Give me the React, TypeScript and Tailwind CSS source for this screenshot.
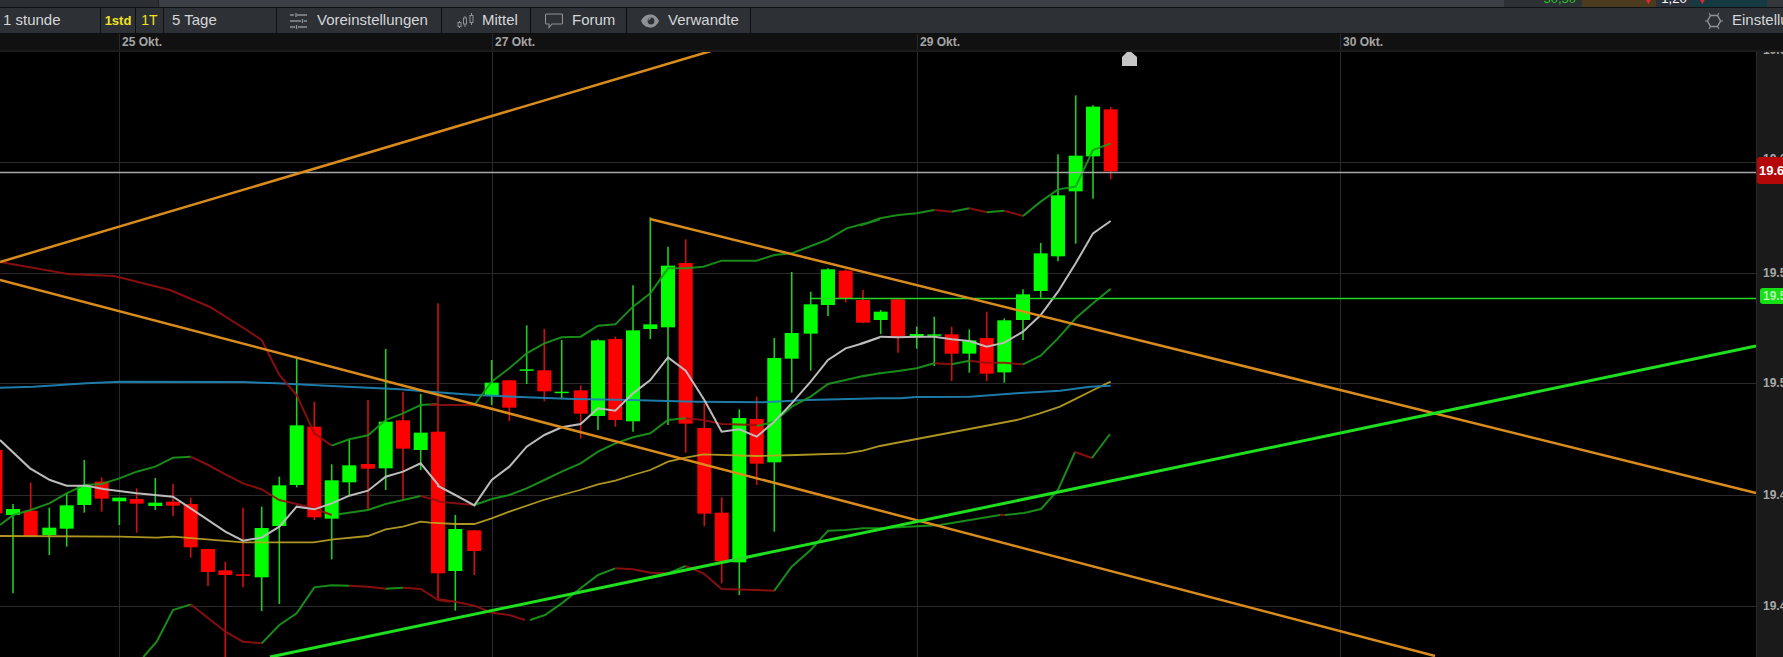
type Pt = [number, number];

// Each list was read from one part of the chart, so each has its own offset
const a = (l: number[]): Pt[] => pairs(l).map(([x, y]) => [x / 3, 330 + y / 3]);
const b = (l: number[]): Pt[] => pairs(l).map(([x, y]) => [430 + x / 3, 200 + y / 3]);
const c = (l: number[]): Pt[] => pairs(l).map(([x, y]) => [860 + x / 3, 60 + y / 3]);

function pairs(l: number[]): Pt[] {
  const out: Pt[] = [];
  for (let i = 0; i < l.length; i += 2) out.push([l[i], l[i + 1]]);
  return out;
}

const toPath = (p: Pt[]) => p.map(([x, y]) => `${x},${y}`).join(' ');

const G = '#00ff00';
const R = '#ff0000';

// x, wick top, body top, body bottom, wick bottom, colour
type Candle = [number, number, number, number, number, string];

const candles: Candle[] = [
  ...([
    [-4.5, 330, 360, 550, 560, R],
    [13, 522, 537, 555, 790, G],
    [30.7, 458, 542, 618, 620, R],
    [49.3, 533, 593, 615, 675, G],
    [66.7, 490, 526, 596, 650, G],
    [84.3, 390, 467, 525, 548, G],
    [101.7, 442, 455, 506, 545, R],
    [119.3, 503, 503, 514, 585, G],
    [136.7, 475, 507, 521, 608, R],
    [155.3, 444, 518, 528, 540, G],
    [173, 462, 515, 527, 558, R],
    [190.7, 503, 522, 652, 683, R],
    [208, 657, 657, 726, 768, R],
    [225.3, 695, 721, 735, 981, R],
    [243, 533, 733, 735, 772, R],
    [261.7, 530, 594, 742, 843, G],
    [279.3, 440, 466, 588, 822, G],
    [296.7, 80, 286, 465, 472, G],
    [314.3, 215, 290, 562, 570, R],
    [331.7, 403, 451, 566, 688, G],
    [349.3, 330, 406, 457, 495, G],
    [368, 210, 402, 416, 540, R],
    [385.7, 57, 275, 415, 480, G],
    [403, 185, 271, 356, 507, R],
    [420.7, 192, 308, 360, 420, G],
  ] as Candle[]).map(([x, h, t, u, l, col]): Candle => [x, 330 + h / 3, 330 + t / 3, 330 + u / 3, 330 + l / 3, col]),
  ...([
    [438, 310, 695, 1120, 1195, R],
    [455.3, 945, 987, 1113, 1232, G],
    [474.3, 990, 991, 1053, 1125, R],
    [491.7, 480, 548, 586, 615, G],
    [509.3, 540, 541, 623, 663, R],
    [526.7, 376, 508, 510, 552, G],
    [544.3, 387, 511, 574, 604, R],
    [561.7, 420, 575, 577, 595, G],
    [580.7, 556, 571, 641, 716, R],
    [598, 418, 421, 648, 690, G],
    [615.3, 410, 417, 660, 680, R],
    [633, 256, 391, 664, 695, G],
    [650.3, 52, 373, 387, 417, G],
    [668, 140, 197, 382, 675, G],
    [685.7, 118, 189, 671, 758, R],
    [704.3, 610, 684, 941, 978, R],
    [721.7, 892, 938, 1084, 1150, R],
    [739.3, 628, 654, 1087, 1185, G],
    [756.7, 590, 657, 791, 855, R],
    [774.3, 414, 474, 787, 995, G],
    [791.7, 216, 399, 476, 578, G],
    [810.7, 275, 313, 401, 512, G],
    [828, 205, 208, 315, 348, G],
    [845.7, 208, 212, 296, 307, R],
    [863, 270, 300, 368, 370, R],
  ] as Candle[]).map(([x, h, t, u, l, col]): Candle => [x, 200 + h / 3, 200 + t / 3, 200 + u / 3, 200 + l / 3, col]),
  ...([
    [880.7, 750, 755, 780, 822, G],
    [898, 718, 718, 830, 878, R],
    [916.7, 800, 822, 832, 866, G],
    [934.3, 770, 823, 826, 918, G],
    [951.7, 800, 823, 881, 963, R],
    [969.3, 808, 841, 881, 938, G],
    [986.7, 755, 834, 941, 963, R],
    [1004.3, 775, 781, 937, 968, G],
    [1023, 688, 703, 780, 840, G],
    [1040.7, 549, 580, 693, 713, G],
    [1058, 283, 406, 589, 604, G],
    [1075.7, 106, 287, 394, 551, G],
    [1093, 136, 140, 289, 416, G],
    [1110.7, 141, 148, 334, 358, R],
  ] as Candle[]).map(([x, h, t, u, l, col]): Candle => [x, 60 + h / 3, 60 + t / 3, 60 + u / 3, 60 + l / 3, col]),
];

const BG = '#1c9a1c';
const BR = '#960f0f';

// Bollinger bands change colour by direction
const bands: { color: string; pts: Pt[] }[] = [
  // upper
  { color: BR, pts: [[0, 262], [68, 274], [114, 276], [170, 290], [210, 307], ...a([740, 0, 785, 30, 838, 135, 890, 195, 943, 310, 995, 347])] },
  { color: BG, pts: a([995, 347, 1048, 328, 1104, 316, 1157, 270, 1209, 250, 1262, 225, 1315, 222]) },
  { color: BR, pts: [...a([1315, 222]), ...b([0, 615, 133, 615])] },
  { color: BG, pts: [...b([133, 615, 185, 545, 238, 505, 290, 460, 343, 430, 395, 412, 452, 410, 504, 377, 556, 373, 609, 320, 661, 280, 714, 205, 767, 205, 820, 200, 875, 182, 980, 182, 1033, 165, 1085, 160, 1190, 120, 1250, 85, 1350, 58]), ...c([0, 497, 60, 475, 115, 465, 170, 460, 223, 450])] },
  { color: BR, pts: c([223, 450, 275, 455]) },
  { color: BG, pts: c([275, 455, 328, 445]) },
  { color: BR, pts: c([328, 445, 380, 457]) },
  { color: BG, pts: c([380, 457, 433, 452]) },
  { color: BR, pts: c([433, 452, 489, 468]) },
  { color: BG, pts: c([489, 468, 542, 425, 594, 388, 647, 380, 699, 270, 752, 250]) },
  // middle
  { color: BG, pts: a([0, 585, 40, 555, 92, 540, 148, 520, 200, 490, 253, 465, 305, 462, 358, 445, 410, 425, 466, 410, 519, 383, 572, 380]) },
  { color: BR, pts: a([572, 380, 625, 405, 676, 433, 729, 460, 785, 478, 838, 510, 890, 522, 943, 535, 995, 555]) },
  { color: BG, pts: a([1015, 553, 1104, 540, 1157, 522, 1262, 498]) },
  { color: BR, pts: [...a([1262, 498, 1315, 512]), ...b([24, 905, 133, 915])] },
  { color: BG, pts: b([133, 915, 185, 897, 238, 885, 290, 865, 343, 840, 395, 815, 452, 790, 504, 755, 556, 730, 609, 712, 661, 700, 714, 660, 767, 655]) },
  { color: BR, pts: b([767, 655, 820, 660, 875, 672, 980, 675]) },
  { color: BG, pts: [...b([980, 678, 1033, 665, 1085, 620, 1142, 590, 1194, 552, 1247, 540, 1299, 528, 1350, 520]), ...c([0, 950, 60, 940, 115, 933, 170, 925, 223, 910])] },
  { color: BR, pts: c([223, 910, 275, 913]) },
  { color: BG, pts: c([275, 913, 328, 902]) },
  { color: BR, pts: c([328, 902, 380, 908, 433, 908, 489, 913]) },
  { color: BG, pts: c([489, 913, 542, 887, 594, 835, 647, 775, 699, 730, 752, 686]) },
  // lower
  { color: BG, pts: a([430, 981, 470, 935, 519, 840, 572, 823]) },
  { color: BR, pts: a([572, 823, 625, 865, 676, 905, 729, 935, 785, 940]) },
  { color: BG, pts: a([785, 940, 838, 885, 890, 850, 943, 772, 995, 766, 1048, 767]) },
  { color: BR, pts: a([1048, 767, 1104, 770, 1157, 776]) },
  { color: BG, pts: a([1157, 776, 1209, 773]) },
  { color: BR, pts: [...a([1209, 773, 1262, 777, 1315, 810, 1350, 815]), ...b([24, 1197, 76, 1205, 133, 1217, 185, 1238, 238, 1245, 285, 1260])] },
  { color: BG, pts: b([300, 1260, 345, 1245, 395, 1210, 452, 1165, 504, 1125, 556, 1105]) },
  { color: BR, pts: b([556, 1105, 609, 1108, 661, 1118, 714, 1120]) },
  { color: BG, pts: b([714, 1120, 767, 1098]) },
  { color: BR, pts: b([767, 1098, 820, 1120, 875, 1167, 1033, 1172]) },
  { color: BG, pts: [...b([1033, 1172, 1085, 1100, 1142, 1050, 1194, 992, 1247, 990, 1299, 985, 1350, 985]), [940, 525], [1000, 515]] },
  { color: BR, pts: [[1000, 515], [1005, 515]] },
  { color: BG, pts: [[1005, 515], [1024, 513], [1041, 509], [1058, 490], [1075, 452]] },
  { color: BR, pts: [[1075, 452], [1092, 458]] },
  { color: BG, pts: [[1092, 458], [1110, 434]] },
];

const white = [
  ...a([0, 330, 90, 415, 150, 450, 200, 467, 260, 467, 310, 477, 410, 490, 519, 500, 572, 535, 676, 605, 729, 632, 785, 623, 838, 590, 890, 530, 943, 538, 995, 520, 1048, 497, 1104, 482, 1157, 440, 1209, 425, 1262, 400, 1315, 465]),
  ...b([24, 858, 76, 885, 133, 916, 185, 840, 238, 800, 290, 740, 343, 705, 395, 682, 452, 672, 504, 625, 556, 632, 609, 580, 661, 540, 714, 472, 767, 512, 823, 600, 875, 695, 928, 688, 980, 710, 1033, 665, 1085, 610, 1142, 545, 1194, 480, 1247, 445, 1299, 430, 1350, 412]),
  ...c([0, 852, 62, 830, 114, 832, 170, 830, 223, 830, 275, 838, 328, 843, 380, 860, 433, 848, 489, 815, 542, 765, 594, 695, 647, 610, 699, 520, 752, 483]),
];

const blue = [
  ...a([0, 173, 100, 170, 260, 160, 358, 155, 730, 156, 830, 160, 1040, 170, 1200, 178]),
  ...b([0, 575, 135, 585, 290, 592, 430, 597, 600, 600, 800, 605, 1000, 607, 1130, 600, 1350, 595]),
  ...c([120, 1015, 170, 1011, 330, 1010, 470, 1000, 600, 992, 690, 980, 752, 977]),
];

const yellow = [
  ...a([0, 618, 360, 620, 470, 623, 520, 620, 620, 628, 730, 637, 940, 637, 1000, 628, 1104, 618, 1157, 598, 1209, 590, 1262, 575]),
  ...b([0, 968, 76, 972, 133, 972, 185, 955, 238, 935, 340, 900, 450, 870, 504, 853, 556, 842, 609, 825, 661, 810, 714, 785, 767, 773, 820, 763, 980, 768, 1100, 765, 1250, 760, 1299, 752, 1350, 738]),
  ...c([470, 1080, 540, 1060, 600, 1040, 650, 1015, 700, 990, 752, 965]),
];

const gridX = [119.5, 492.5, 917.5, 1340.5];
const gridY = [162.5, 273.5, 383.5, 495.5, 606.5];

function Chart() {
  return (
    <svg viewBox="0 52 1756 605" className="block h-full w-full overflow-visible bg-black">
      {gridX.map(x => (
        <line key={x} x1={x} x2={x} y1={52} y2={657} stroke="#2a2a2a" />
      ))}
      {gridY.map(y => (
        <line key={y} x1={0} x2={1756} y1={y} y2={y} stroke="#2a2a2a" />
      ))}

      {candles.map(([x, hi, top, bottom, lo, col]) => (
        <g key={x}>
          <line x1={x} x2={x} y1={hi} y2={lo} stroke={col === G ? '#22cc22' : '#d01010'} strokeWidth={1.6} />
          <rect x={x - 7} y={top} width={14} height={Math.max(bottom - top, 1.5)} fill={col} />
        </g>
      ))}

      <polyline points={toPath(yellow)} fill="none" stroke="#bfa524" strokeWidth={1.8} opacity={0.9} />
      <polyline points={toPath(blue)} fill="none" stroke="#1f82b0" strokeWidth={2} opacity={0.95} />
      {bands.map((s, i) => (
        <polyline key={i} points={toPath(s.pts)} fill="none" stroke={s.color} strokeWidth={2} opacity={0.9} />
      ))}
      <polyline points={toPath(white)} fill="none" stroke="#bcbcbc" strokeWidth={2} />

      <line x1={0} x2={1756} y1={172.5} y2={172.5} stroke="#a8a8a8" strokeWidth={1.3} />
      <line x1={810} x2={1756} y1={298.5} y2={298.5} stroke="#22d822" strokeWidth={1.3} />

      <line x1={0} y1={262} x2={711} y2={51} stroke="#d98c1c" strokeWidth={2.5} />
      <line x1={0} y1={280} x2={1435} y2={656} stroke="#d98c1c" strokeWidth={2.5} />
      <line x1={650} y1={219} x2={1756} y2={493} stroke="#d98c1c" strokeWidth={2.5} />
      <line x1={270} y1={657} x2={1756} y2={346} stroke="#1fe01f" strokeWidth={3} />

      <polygon points="1129,50 1137,57 1137,66 1122,66 1122,57" fill="#c6c6c6" />
    </svg>
  );
}

function SlidersIcon() {
  return (
    <svg viewBox="0 0 18 18" className="h-[18px] w-[18px] flex-none" fill="none" stroke="#8f9296" strokeWidth={1.3}>
      <path d="M0 3h4M7 3h10M6 1v4M0 9h11M14 9h3M12.500 7v4M0 15h5M8 15h9M6.500 13v4" />
    </svg>
  );
}

function CandlesIcon() {
  return (
    <svg viewBox="0 0 18 18" className="h-[18px] w-[18px] flex-none" fill="none" stroke="#8f9296" strokeWidth={1}>
      <path d="M2.500 9v7M8 4v11M14.500 1v12" />
      <rect x="1" y="10.500" width="3" height="4" fill="#2d3035" />
      <rect x="6.500" y="6" width="3" height="6" fill="#2d3035" />
      <rect x="13" y="3.500" width="3" height="7" fill="#2d3035" />
    </svg>
  );
}

function BubbleIcon() {
  return (
    <svg viewBox="0 0 18 16" className="h-4 w-[18px] flex-none" fill="none" stroke="#8f9296" strokeWidth={1.1}>
      <path d="M1.500 1h15a1 1 0 0 1 1 1v8a1 1 0 0 1-1 1H7l-3 3.500V11H1.500a1 1 0 0 1-1-1V2a1 1 0 0 1 1-1z" />
    </svg>
  );
}

function EyeIcon() {
  return (
    <svg viewBox="0 0 18 14" className="h-[14px] w-[18px] flex-none">
      <path d="M0 7C2 2.500 5.500 0.500 9.500 0.500S16 3 18 7c-2 4-4.500 6.500-8.500 6.500S2 11.500 0 7z" fill="#8f9296" />
      <circle cx="10" cy="7" r="3.400" fill="#2d3035" />
      <path d="M7.500 4.500a3.500 3.500 0 0 1 3-1L7.500 7z" fill="#8f9296" />
    </svg>
  );
}

function GearIcon() {
  return (
    <svg viewBox="0 0 18 18" className="h-[18px] w-[18px] flex-none" fill="none" stroke="#8f9296" strokeWidth={1.5}>
      <path d="M5.500 3.500h7L15.500 9l-3 5.500h-7L2.500 9z" />
      <path d="M0 9h2.500M15.500 9H18M4 1l1.500 2.500M14 1l-1.500 2.500M4 17l1.500-2.500M14 17l-1.500-2.500" strokeWidth={1.1} />
    </svg>
  );
}

function ToolButton({ width, children }: { width: string; children: React.ReactNode }) {
  return <div className={`flex h-full items-center border-r border-[#0e0f10] ${width}`}>{children}</div>;
}

const dateLabels = [
  { label: '25 Okt.', cls: 'left-[119px]' },
  { label: '27 Okt.', cls: 'left-[492px]' },
  { label: '29 Okt.', cls: 'left-[917px]' },
  { label: '30 Okt.', cls: 'left-[1340px]' },
];

const priceLabels = [
  { label: '19.6', cls: 'top-[-9px]' },
  { label: '19.6', cls: 'top-[100px]' },
  { label: '19.5', cls: 'top-[214px]' },
  { label: '19.5', cls: 'top-[324px]' },
  { label: '19.4', cls: 'top-[436px]' },
  { label: '19.4', cls: 'top-[547px]' },
];

export default function App() {
  return (
    <div className="flex h-[657px] w-[1783px] flex-col overflow-hidden bg-black font-['Liberation_Sans',Arial,sans-serif]">
      {/* cut off strip of the panel above */}
      <div className="flex h-2 flex-none border-b border-[#111214] bg-[#3c4046]">
        <div className="w-[159px] border-r border-[#1e2023] bg-[#2b2e33]" />
        <div className="flex-1" />
        <div className="flex w-[78px] justify-end overflow-hidden bg-[#2d3035] pr-[6px]">
          <span className="-mt-[9px] text-[13px] leading-[15px] text-[#22c522]">50,50</span>
        </div>
        <div className="flex w-[74px] justify-end overflow-hidden bg-[#4a3a20] pr-[3px]">
          <span className="-mt-[4px] text-[10px] leading-[10px] text-[#e8212e]">▼</span>
        </div>
        <div className="flex w-[36px] justify-center overflow-hidden bg-[#2b303a]">
          <span className="-mt-[9px] text-[13px] leading-[15px] text-white">1,20</span>
        </div>
        <div className="w-[75px] overflow-hidden bg-[#153a42] pl-[5px]">
          <span className="-mt-[4px] block text-[10px] leading-[10px] text-[#e8212e]">▼</span>
        </div>
        <div className="w-[16px] bg-[#34373c]" />
      </div>

      {/* toolbar */}
      <div className="flex h-[26px] flex-none items-center border-b border-[#0e0f10] bg-[#2d3035] text-[15px] text-[#d4d6d8]">
        <ToolButton width="w-[101px] pl-[3px]">1 stunde</ToolButton>
        <ToolButton width="w-[35px] justify-center text-[13px] font-bold text-[#f2e21d]">1std</ToolButton>
        <ToolButton width="w-[28px] justify-center text-[14px] text-[#f2e21d]">1T</ToolButton>
        <ToolButton width="w-[113px] pl-[8px]">5 Tage</ToolButton>
        <ToolButton width="w-[165px] gap-[9px] pl-[13px]">
          <SlidersIcon />
          <span>Voreinstellungen</span>
        </ToolButton>
        <ToolButton width="w-[89px] gap-[7px] pl-[15px]">
          <CandlesIcon />
          <span>Mittel</span>
        </ToolButton>
        <ToolButton width="w-[96px] gap-[9px] pl-[14px]">
          <BubbleIcon />
          <span>Forum</span>
        </ToolButton>
        <ToolButton width="w-[124px] gap-[9px] pl-[14px]">
          <EyeIcon />
          <span>Verwandte</span>
        </ToolButton>
        <div className="ml-auto flex w-[78px] items-center gap-[9px] overflow-hidden whitespace-nowrap">
          <GearIcon />
          <span>Einstellungen</span>
        </div>
      </div>

      {/* date axis */}
      <div className="relative h-[18px] flex-none border-b-2 border-[#1b1b1b] bg-[#111111]">
        {dateLabels.map(d => (
          <div key={d.label} className={`absolute top-0 h-full border-l border-[#2a2a2a] pl-[2px] text-[12px] leading-[17px] font-bold text-[#a6a6a6] ${d.cls}`}>
            {d.label}
          </div>
        ))}
      </div>

      <div className="flex min-h-0 flex-1">
        <div className="min-w-0 flex-1">
          <Chart />
        </div>

        {/* price axis */}
        <div className="relative w-[27px] flex-none overflow-hidden border-l border-[#2b2b2b] bg-[#1a1a1a] text-[12px] leading-[14px] font-bold text-[#a9a9a9]">
          {priceLabels.map((p, i) => (
            <div key={i} className={`absolute left-[6px] ${p.cls}`}>
              {p.label}
            </div>
          ))}
          <div className="absolute top-[105px] left-0 h-[27px] w-[40px] rounded-[3px] bg-[#b40808] pl-[2px] text-[13px] leading-[27px] text-white">19.6</div>
          <div className="absolute top-[236px] left-[3px] h-[16px] w-[40px] rounded-[3px] bg-[#14e014] pl-[3px] text-[12px] leading-[16px] text-[#b5f5b5]">19.5</div>
        </div>
      </div>
    </div>
  );
}
